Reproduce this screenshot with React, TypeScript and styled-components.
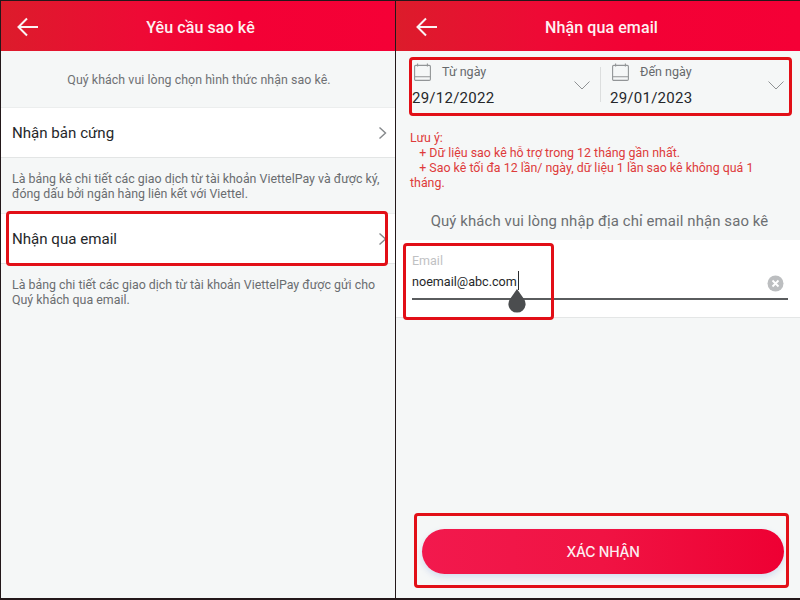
import React from 'react'
import styled, { createGlobalStyle } from 'styled-components'

const GlobalStyle = createGlobalStyle`
  html, body {
    margin: 0;
    padding: 0;
    background: #f5f7f7;
  }
  body {
    font-family: Roboto, "Noto Sans", sans-serif;
  }
`

const Page = styled.div`
  width: 800px;
  height: 600px;
  display: grid;
  grid-template-columns: 395px 405px;
  overflow: hidden;
  background: #23181a;
  padding-top: 1px;
  padding-bottom: 2px;
  box-sizing: border-box;
`

const Screen = styled.div`
  position: relative;
  display: flex;
  flex-direction: column;
  min-width: 0;
  background: #f5f7f7;
  margin-left: 1px;
`

const Header = styled.div`
  height: 50px;
  flex: none;
  display: flex;
  align-items: center;
  justify-content: center;
  position: relative;
  background: linear-gradient(90deg, #dc1c2b 0%, #ee0a35 35%, #f30135 60%, #f50036 100%);
`

const BackButton = styled.svg<{ $left: number }>`
  position: absolute;
  left: ${(p) => p.$left}px;
  top: 16px;
  width: 22px;
  height: 20px;
  fill: none;
  stroke: #fbf3f3;
  stroke-width: 2;
`

const Title = styled.div<{ $shift: number }>`
  color: #fdf1f1;
  font-size: 16px;
  font-weight: 500;
  letter-spacing: 0.1px;
  margin-left: ${(p) => p.$shift}px;
  padding-top: 2px;
`

const Intro = styled.div`
  height: 56px;
  flex: none;
  display: flex;
  align-items: center;
  justify-content: center;
  color: #6f7174;
  font-size: 12.4px;
  letter-spacing: 0.05px;
  padding: 1px 0 0 2px;
  box-sizing: border-box;
`

const OptionRow = styled.div`
  height: 51px;
  flex: none;
  display: flex;
  align-items: center;
  justify-content: space-between;
  padding: 0 8px 0 11px;
  background: #fff;
  border-top: 1px solid #eceeee;
  border-bottom: 1px solid #e3e5e5;
  box-sizing: border-box;
  color: #25272a;
  font-size: 15.1px;
`

const Chevron = styled.svg`
  width: 9px;
  height: 14px;
  fill: none;
  stroke: #85888b;
  stroke-width: 1.4;
`

const OptionNote = styled.div<{ $height: number }>`
  height: ${(p) => p.$height}px;
  flex: none;
  padding: 13px 6px 0 11px;
  box-sizing: border-box;
  color: #6a6d70;
  font-size: 12.4px;
  line-height: 15px;
`

const DateBar = styled.div`
  flex: none;
  height: 62px;
  display: grid;
  grid-template-columns: 188px 1fr;
  padding: 7px 0 0 16px;
  box-sizing: border-box;
`

const DateField = styled.div<{ $divider?: boolean }>`
  position: relative;
  height: 50px;
  padding-left: ${(p) => (p.$divider ? '10px' : '0')};

  &::before {
    content: '';
    display: ${(p) => (p.$divider ? 'block' : 'none')};
    position: absolute;
    left: 0;
    top: 9px;
    width: 1px;
    height: 35px;
    background: #dcdede;
  }
`

const DateLabelRow = styled.div`
  display: flex;
  align-items: center;
  gap: 11px;
  height: 26px;
  padding-left: 2px;
  color: #66696c;
  font-size: 12.5px;
`

const CalendarIcon = styled.svg`
  width: 17px;
  height: 18px;
  margin-top: 2px;
  fill: none;
  stroke: #929597;
  stroke-width: 1.1;
`

const DateValue = styled.div`
  color: #25272a;
  font-size: 15px;
  margin-top: 5px;
  letter-spacing: 0.25px;
`

const DropArrow = styled.svg<{ $right: number }>`
  position: absolute;
  top: 23px;
  right: ${(p) => p.$right}px;
  width: 16px;
  height: 9px;
  fill: none;
  stroke: #8f9294;
  stroke-width: 1;
`

const Warning = styled.div`
  flex: none;
  height: 99px;
  padding: 17px 6px 0 14px;
  box-sizing: border-box;
  color: #de3b3b;
  font-size: 12.4px;
  line-height: 15px;
  white-space: pre-wrap;
`

const EmailPrompt = styled.div`
  flex: none;
  height: 28px;
  text-align: center;
  color: #6c6f72;
  font-size: 14.9px;
  letter-spacing: 0.12px;
  line-height: 18px;
  padding-left: 3px;
`

const EmailCard = styled.div`
  flex: none;
  height: 78px;
  background: #fff;
  border-bottom: 1px solid #e4e6e6;
  padding: 13px 12px 0 16px;
  box-sizing: border-box;
`

const EmailLabel = styled.div`
  color: #bfc1c3;
  font-size: 12.5px;
  line-height: 15px;
`

const EmailInput = styled.div`
  position: relative;
  height: 27px;
  padding-bottom: 3px;
  display: flex;
  align-items: center;
  justify-content: space-between;
  border-bottom: 2px solid #5a5c5e;
  color: #25272a;
  font-size: 12.6px;
`

const EmailText = styled.span`
  position: relative;
`

const Caret = styled.span`
  position: absolute;
  right: -2px;
  top: -3px;
  width: 1px;
  height: 19px;
  background: #2a2c2e;
`

const CaretHandle = styled.svg`
  position: absolute;
  left: 95px;
  top: 17px;
  width: 20px;
  height: 28px;
  fill: #4b4d4f;
`

const ClearIcon = styled.svg`
  width: 17px;
  height: 17px;
  margin-right: 4px;
  margin-top: 3px;
`

const Spacer = styled.div`
  flex: 1;
`

const ConfirmWrap = styled.div`
  flex: none;
  padding: 0 16px 24px 26px;
`

const ConfirmButton = styled.button`
  width: 100%;
  height: 45px;
  border: none;
  border-radius: 23px;
  display: flex;
  align-items: center;
  justify-content: center;
  background: linear-gradient(90deg, #f2194d 0%, #f01343 50%, #ee0033 100%);
  box-shadow: 0 3px 6px rgba(170, 190, 230, 0.45);
  color: #fdeef1;
  font-family: Inter, Roboto, sans-serif;
  font-size: 14px;
  font-weight: 500;
  letter-spacing: -0.2px;
  padding: 0;
`

const Highlight = styled.div<{ $x: number; $y: number; $w: number; $h: number }>`
  position: absolute;
  left: ${(p) => p.$x}px;
  top: ${(p) => p.$y}px;
  width: ${(p) => p.$w}px;
  height: ${(p) => p.$h}px;
  border: 3px solid #e20f17;
  border-radius: 4px;
  box-sizing: border-box;
  pointer-events: none;
`

const BackArrow = ({ left }: { left: number }) => (
  <BackButton $left={left} viewBox="0 0 22 20">
    <path d="M21 10H2M10 1.5 1.5 10l8.5 8.5" />
  </BackButton>
)

const ChevronRight = () => (
  <Chevron viewBox="0 0 9 14">
    <path d="M1.5 1.5 7.5 7l-6 5.5" />
  </Chevron>
)

const Calendar = () => (
  <CalendarIcon viewBox="0 0 17 18">
    <rect x="0.6" y="2.4" width="15.8" height="15" rx="1.2" />
    <path d="M0.6 13.8H16.4M3.6 0.4V3.6M13.4 0.4V3.6" />
  </CalendarIcon>
)

const Hollow = ({ right }: { right: number }) => (
  <DropArrow $right={right} viewBox="0 0 16 9">
    <path d="M0.5 0.5 8 8l7.5-7.5" />
  </DropArrow>
)

const App = () => {
  return (
    <Page>
      <GlobalStyle />
      <Screen>
        <Header>
          <BackArrow left={16} />
          <Title $shift={5}>Yêu cầu sao kê</Title>
        </Header>
        <Intro>Quý khách vui lòng chọn hình thức nhận sao kê.</Intro>
        <OptionRow>
          Nhận bản cứng
          <ChevronRight />
        </OptionRow>
        <OptionNote $height={55}>
          Là bảng kê chi tiết các giao dịch từ tài khoản ViettelPay và được ký,
          <br />
          đóng dấu bởi ngân hàng liên kết với Viettel.
        </OptionNote>
        <OptionRow>
          Nhận qua email
          <ChevronRight />
        </OptionRow>
        <OptionNote $height={60}>
          Là bảng chi tiết các giao dịch từ tài khoản ViettelPay được gửi cho
          <br />
          Quý khách qua email.
        </OptionNote>
        <Highlight $x={5} $y={210} $w={382} $h={55} />
      </Screen>
      <Screen>
        <Header>
          <BackArrow left={20} />
          <Title $shift={7}>Nhận qua email</Title>
        </Header>
        <DateBar>
          <DateField>
            <DateLabelRow>
              <Calendar />
              Từ ngày
            </DateLabelRow>
            <DateValue>29/12/2022</DateValue>
            <Hollow right={10} />
          </DateField>
          <DateField $divider>
            <DateLabelRow>
              <Calendar />
              Đến ngày
            </DateLabelRow>
            <DateValue>29/01/2023</DateValue>
            <Hollow right={16} />
          </DateField>
        </DateBar>
        <Warning>
          {'Lưu ý:\n   + Dữ liệu sao kê hỗ trợ trong 12 tháng gần nhất.\n   + Sao kê tối đa 12 lần/ ngày, dữ liệu 1 lần sao kê không quá 1\ntháng.'}
        </Warning>
        <EmailPrompt>Quý khách vui lòng nhập địa chỉ email nhận sao kê</EmailPrompt>
        <EmailCard>
          <EmailLabel>Email</EmailLabel>
          <EmailInput>
            <EmailText>
              noemail@abc.com
              <Caret />
            </EmailText>
            <ClearIcon viewBox="0 0 17 17">
              <circle cx="8.5" cy="8.5" r="8" fill="#bcbec0" />
              <path d="M5.5 5.5l6 6M11.5 5.5l-6 6" stroke="#fff" strokeWidth="1.8" />
            </ClearIcon>
            <CaretHandle viewBox="0 0 20 28">
              <path d="M10 4 3 14a8.6 8.6 0 1 0 14 0Z" />
            </CaretHandle>
          </EmailInput>
        </EmailCard>
        <Spacer />
        <ConfirmWrap>
          <ConfirmButton>XÁC NHẬN</ConfirmButton>
        </ConfirmWrap>
        <Highlight $x={13} $y={56} $w={383} $h={59} />
        <Highlight $x={7} $y={242} $w={151} $h={77} />
        <Highlight $x={18} $y={512} $w={375} $h={75} />
      </Screen>
    </Page>
  )
}

export default App
